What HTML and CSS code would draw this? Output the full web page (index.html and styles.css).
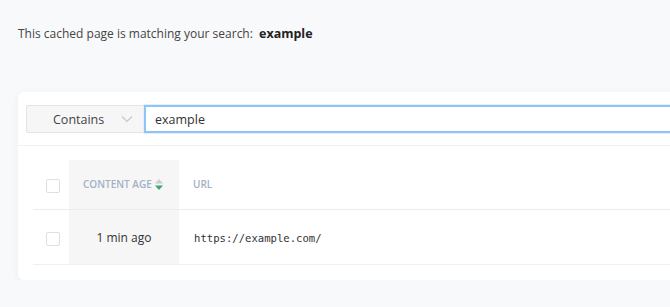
FILE: index.html
```html
<!DOCTYPE html>
<html>
<head>
  <link rel="stylesheet" href="styles.css">
</head>
<body>
  <p class="notice">This cached page is matching your search: <b>example</b></p>

  <div class="card">
    <div class="filter">
      <div class="select">
        <span>Contains</span>
        <svg class="chev" width="12" height="8" viewBox="0 0 12 8"><path d="M1 1.5 L6 6.5 L11 1.5" fill="none" stroke="#c4c8cf" stroke-width="1.2"/></svg>
      </div>
      <div class="search">example</div>
    </div>

    <table class="results">
      <tr class="head">
        <th class="check"><span class="box"></span></th>
        <th class="age">CONTENT AGE
          <svg class="sort" width="8" height="11" viewBox="0 0 8 11"><path d="M4 0 L8 4.5 H0 Z" fill="#c9ccd2"/><path d="M0 6.5 H8 L4 11 Z" fill="#3aa76d"/></svg>
        </th>
        <th class="url">URL</th>
      </tr>
      <tr class="row">
        <td class="check"><span class="box"></span></td>
        <td class="age">1 min ago</td>
        <td class="url"><code>https://example.com/</code></td>
      </tr>
    </table>
  </div>
</body>
</html>
```

FILE: styles.css
```css
body {
  margin: 0;
  background: #f8f9fb;
  font-family: "Open Sans", "Noto Sans", sans-serif;
  color: #333;
  overflow: hidden;
}
.notice {
  margin: 0;
  padding: 25px 18px 0;
  font-size: 12px;
  color: #444;
  height: 67px;
}
.notice b {
  color: #222;
  margin-left: 3px;
  font-size: 12.5px;
}
.card {
  margin-left: 18px;
  width: 700px;
  height: 188px;
  background: #fff;
  border-radius: 6px;
  box-shadow: 0 2px 10px rgba(30, 40, 70, 0.05);
}
.filter {
  display: flex;
  padding: 13px 0 12px 8px;
  border-bottom: 1px solid #eef0f5;
}
.select {
  width: 116px;
  height: 26px;
  background: #f6f6f7;
  border: 1px solid #e3e4e7;
  border-radius: 2px 0 0 2px;
  display: flex;
  align-items: center;
  font-size: 12.5px;
  color: #444;
}
.select span {
  margin-left: 26px;
  flex: 1;
}
.chev {
  margin-right: 10px;
}
.search {
  flex: 1;
  height: 24px;
  border: 2px solid #8ec4f6;
  box-shadow: 0 0 0 1px #e3f0fc;
  display: flex;
  align-items: center;
  padding-left: 9px;
  font-size: 12.5px;
  color: #333;
}
.results {
  border-collapse: collapse;
  margin: 14px 0 0 15px;
  width: 680px;
}
.results th, .results td {
  padding: 0;
}
.head {
  height: 49px;
}
.row {
  height: 55px;
}
.head th {
  border-bottom: 1px solid #e9ecf2;
}
.row td {
  border-bottom: 1px solid #eef0f4;
}
.check {
  width: 36px;
  text-align: center;
}
.box {
  display: inline-block;
  width: 12px;
  height: 12px;
  border: 1px solid #dcdfe4;
  border-radius: 2px;
  background: #fff;
  vertical-align: middle;
  margin-left: 3px;
}
.row .box {
  margin-top: 2px;
}
th.age, th.url {
  font-size: 10px;
  font-weight: 600;
  color: #a3b0c8;
  text-align: left;
}
.age {
  width: 110px;
  background: #f6f6f6;
}
th.age {
  padding-left: 14px;
  width: 96px;
}
.sort {
  vertical-align: -2px;
  margin-left: 1px;
}
th.url {
  padding-left: 14px;
}
td.age {
  text-align: center;
  font-size: 12px;
  color: #333;
  padding-top: 2px;
}
td.url {
  padding-left: 15px;
  vertical-align: top;
  padding-top: 15px;
}
code {
  font-family: "DejaVu Sans Mono", "Liberation Mono", monospace;
  font-size: 10.6px;
  color: #333;
}
```
